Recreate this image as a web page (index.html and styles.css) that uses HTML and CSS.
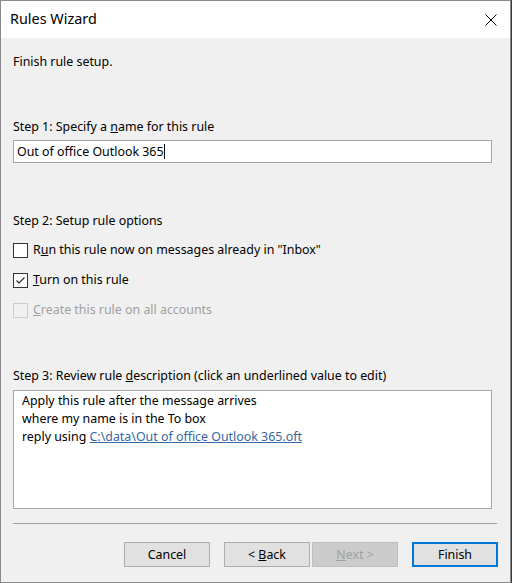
FILE: index.html
```html
<!DOCTYPE html>
<html>
<head>
<meta charset="utf-8">
<link rel="stylesheet" href="styles.css">
</head>
<body>
<div class="window">
  <div class="titlebar">
    <span class="title">Rules Wizard</span>
    <span class="close">
      <svg width="12" height="12" viewBox="0 0 12 12"><path d="M0.5 0.5 L11.5 11.5 M11.5 0.5 L0.5 11.5" stroke="#000" stroke-width="1" fill="none"/></svg>
    </span>
  </div>
  <div class="content">
    <div class="label intro">Finish rule setup.</div>
    <div class="label step1">Step 1: Specify a <u>n</u>ame for this rule</div>
    <div class="input"><span>Out of office Outlook 365</span><span class="caret"></span></div>
    <div class="label step2">Step 2: Setup rule options</div>
    <div class="options">
      <div class="opt"><span class="box"></span><span>R<u>u</u>n this rule now on messages already in "Inbox"</span></div>
      <div class="opt"><span class="box"><svg width="13" height="13" viewBox="0 0 13 13"><path d="M2.5 6.5 L5 9 L10.5 3.5" stroke="#222" stroke-width="1.1" fill="none"/></svg></span><span><u>T</u>urn on this rule</span></div>
      <div class="opt disabled"><span class="box"></span><span><u>C</u>reate this rule on all accounts</span></div>
    </div>
    <div class="label step3">Step 3: Review rule <u>d</u>escription (click an underlined value to edit)</div>
    <div class="desc">
      <div>Apply this rule after the message arrives</div>
      <div>where my name is in the To box</div>
      <div>reply using <a class="link">C:\data\Out of office Outlook 365.oft</a></div>
    </div>
    <div class="sep"></div>
    <div class="buttons">
      <button class="btn">Cancel</button>
      <button class="btn back">&lt; <u>B</u>ack</button>
      <button class="btn next" disabled><u>N</u>ext &gt;</button>
      <button class="btn finish">Finish</button>
    </div>
  </div>
</div>
</body>
</html>
```
FILE: styles.css
```css
html, body {
  margin: 0;
  padding: 0;
}
body {
  background: #3a3a3a;
  width: 512px;
  height: 583px;
  overflow: hidden;
  font-family: "Noto Sans", "Liberation Sans", sans-serif;
  font-size: 12.4px;
  color: #000;
}
.window {
  width: 509px;
  height: 581px;
  border: 1px solid #8a8a8a;
  background: #f0f0f0;
  display: flex;
  flex-direction: column;
}
.titlebar {
  height: 37px;
  background: #fff;
  display: flex;
  align-items: center;
  justify-content: space-between;
  padding: 0 13px 0 9px;
}
.title {
  font-size: 14.4px;
  line-height: 20px;
  margin-top: -1px;
}
.close {
  display: flex;
  margin-top: 1px;
}
.content {
  padding-left: 12px;
  display: flex;
  flex-direction: column;
}
.label {
  line-height: 16px;
  height: 16px;
  padding-top: 1px;
  white-space: nowrap;
}
.intro { margin-top: 15px; }
.step1 { margin-top: 48px; }
.input {
  margin-top: 5px;
  height: 21px;
  border: 1px solid #a6a6a6;
  background: #fff;
  display: flex;
  align-items: center;
  padding-left: 3px;
  box-sizing: content-box;
  width: 474px;
}
.caret {
  width: 1px;
  height: 15px;
  background: #000;
  margin-left: 1px;
}
.step2 { margin-top: 49px; }
.options {
  margin-top: 13px;
  display: flex;
  flex-direction: column;
  gap: 14px;
}
.opt {
  height: 16px;
  line-height: 16px;
  display: flex;
  align-items: center;
  gap: 5px;
}
.box {
  width: 13px;
  height: 13px;
  border: 1px solid #333;
  background: #fff;
  display: flex;
}
.opt.disabled { color: #a0a0a0; }
.opt.disabled .box {
  border-color: #cccccc;
  background: #f0f0f0;
}
.step3 { margin-top: 49px; }
.desc {
  margin-top: 6px;
  width: 469px;
  height: 116px;
  border: 1px solid #a6a6a6;
  background: #fff;
  padding: 1px 0 0 8px;
  line-height: 18px;
}
.link {
  color: #3668a3;
  text-decoration: underline;
}
.sep {
  margin-top: 14px;
  width: 484px;
  height: 1px;
  background: #a0a0a0;
}
.buttons {
  margin-top: 18px;
  display: flex;
  justify-content: flex-end;
  padding-right: 12px;
}
.btn {
  width: 86px;
  height: 25px;
  margin: 0;
  padding: 0;
  border: 1px solid #adadad;
  background: #e1e1e1;
  font-family: inherit;
  font-size: 12.4px;
  color: #000;
}
.back { margin-left: 14px; }
.next {
  margin-left: 2px;
  background: #cccccc;
  border-color: #bfbfbf;
  color: #a0a0a0;
}
.finish {
  margin-left: 14px;
  border: 2px solid #0078d7;
}
```
